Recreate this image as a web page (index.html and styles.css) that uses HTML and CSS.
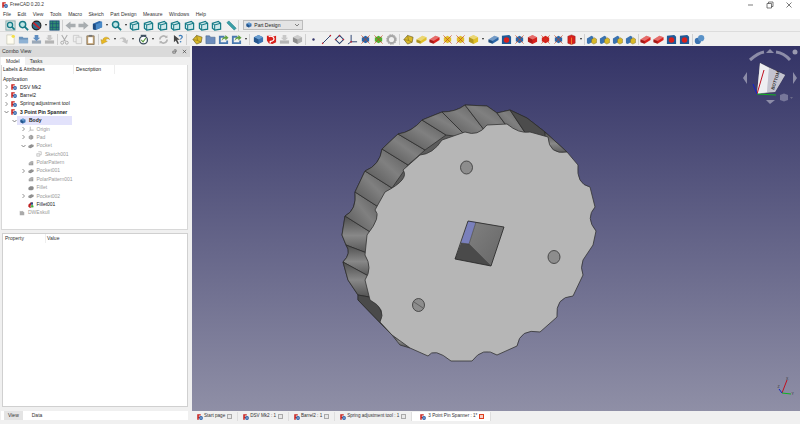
FILE: index.html
```html
<!DOCTYPE html>
<html lang="en">
<head>
    <meta charset="UTF-8">
    <title>FreeCAD 0.20.2</title>
    <link rel="stylesheet" href="styles.css">
</head>
<body>
    <!-- shared icons -->
    <svg class="defs" width="0" height="0">
        <symbol id="fc" viewBox="0 0 12 12"><path d="M.5 .5h7v2.500H3.500v2.500h3V8h-3v3.500H.5z" fill="#c8201c"/><circle cx="8" cy="8" r="3.800" fill="#2a5fa8"/><circle cx="8" cy="8" r="1.400" fill="#cfe0f0"/></symbol>
        <symbol id="mag" viewBox="0 0 12 12"><circle cx="5" cy="5" r="3.400" fill="#bfe6e6" stroke="#157a86" stroke-width="1.600"/><path d="M7.500 7.500l3.500 3.500" stroke="#157a86" stroke-width="2"/></symbol>
        <symbol id="fit" viewBox="0 0 12 12"><rect x="1" y="1" width="10" height="10" fill="#d8e4e4" stroke="#8aa"/><circle cx="5.500" cy="5.500" r="2.800" fill="#bfe6e6" stroke="#157a86" stroke-width="1.400"/><path d="M7.500 7.500l3 3" stroke="#157a86" stroke-width="1.800"/></symbol>
        <symbol id="stop" viewBox="0 0 12 12"><circle cx="6" cy="6" r="4.800" fill="#2f6a8a" stroke="#222" stroke-width="1.200"/><path d="M2.500 2.800l7 6.400" stroke="#d0202a" stroke-width="1.800"/></symbol>
        <symbol id="grid" viewBox="0 0 12 12"><rect x="1" y="1" width="10" height="10" fill="#2f8f6f" stroke="#1d4f7a"/><path d="M4 1v10M8 1v10M1 4h10M1 8h10" stroke="#1d4f7a" stroke-width=".8"/></symbol>
        <symbol id="arr-l" viewBox="0 0 12 12"><path d="M.5 6L6 1.500V4h5.500v4H6v2.500z" fill="#a8adb0"/></symbol>
        <symbol id="arr-r" viewBox="0 0 12 12"><path d="M11.500 6L6 1.500V4H.5v4H6v2.500z" fill="#a8adb0"/></symbol>
        <symbol id="book" viewBox="0 0 12 12"><path d="M1 4l7-3 3 1v6l-7 3-3-1z" fill="#2a66a8"/><path d="M4 5l7-3v6l-7 3z" fill="#4a8ac8"/><path d="M1 4l3 1v6l-3-1z" fill="#1d4a80"/></symbol>
        <symbol id="wire" viewBox="0 0 12 12"><path d="M1.500 3.500L8 1.500l2.500 2v6.500L4 11 1.500 9z" fill="#cfe8ea" stroke="#157a86" stroke-width="1.300"/><path d="M1.500 3.500L4 5.500l6.500-2M4 5.500V11" fill="none" stroke="#157a86" stroke-width="1.100"/></symbol>
        <symbol id="ruler" viewBox="0 0 12 12"><path d="M1 3l2-2 8 8-2 2z" fill="#3aa0a8" stroke="#157a86" stroke-width=".7"/></symbol>
        <symbol id="new" viewBox="0 0 12 12"><path d="M2 1h6l2 2v8H2z" fill="#fffdf0" stroke="#c8c8b8" stroke-width=".8"/><circle cx="9" cy="2.500" r="1.800" fill="#f4e04a"/></symbol>
        <symbol id="open" viewBox="0 0 12 12"><path d="M1 3h4l1 1h5v6H1z" fill="#6c94bc"/><path d="M1 6h10v4H1z" fill="#8fb2d4"/></symbol>
        <symbol id="save" viewBox="0 0 12 12"><path d="M1 7h10v3.500H1z" fill="#9aa8b8"/><path d="M4 1h4v3h2L6 7.500 2 4h2z" fill="#5d8cc0"/></symbol>
        <symbol id="print" viewBox="0 0 12 12"><path d="M1 7h10v3.500H1z" fill="#b4b4b4"/><path d="M4 1h4v3h2L6 7.500 2 4h2z" fill="#c8c8c8"/></symbol>
        <symbol id="cut" viewBox="0 0 12 12"><path d="M3 1l4 7M9 1L5 8" stroke="#aaa" stroke-width="1.100"/><circle cx="3.500" cy="9.500" r="1.600" fill="none" stroke="#aaa"/><circle cx="8.500" cy="9.500" r="1.600" fill="none" stroke="#aaa"/></symbol>
        <symbol id="copy" viewBox="0 0 12 12"><path d="M1.500 1.500h6v7h-6z" fill="#eee" stroke="#ccc"/><path d="M4.500 3.500h6v7h-6z" fill="#eee" stroke="#ccc"/></symbol>
        <symbol id="paste" viewBox="0 0 12 12"><path d="M2 2h8v9.500H2z" fill="#c9a878" stroke="#7a6a50" stroke-width=".8"/><path d="M3.500 3.500h5v6.500h-5z" fill="#fff"/><path d="M4 1h4v2H4z" fill="#777"/></symbol>
        <symbol id="undo" viewBox="0 0 12 12"><path d="M3 7c0-4 6-5 7.500-1-2-1.500-4-1-4.500 1l2 1L2 11 1 6z" fill="#e8b820" stroke="#a88010" stroke-width=".4"/></symbol>
        <symbol id="redo" viewBox="0 0 12 12"><path d="M9 7C9 3 3 2 1.500 6c2-1.500 4-1 4.500 1L4 8l6 3 1-5z" fill="#c4c4c4"/></symbol>
        <symbol id="clock" viewBox="0 0 12 12"><circle cx="6" cy="6.500" r="4.300" fill="#fff" stroke="#3c4e5e" stroke-width="1.400"/><path d="M3 1.500h6" stroke="#3c4e5e" stroke-width="1.300"/><path d="M3.500 6.500l2 2 3-4" fill="none" stroke="#5a9a40" stroke-width="1.200"/></symbol>
        <symbol id="refresh" viewBox="0 0 12 12"><path d="M2 6a4 4 0 0 1 7-2.500M10 6a4 4 0 0 1-7 2.500" fill="none" stroke="#b4b4b4" stroke-width="1.800"/><path d="M7.500 4.500l3-.5-.5-3zM4.500 7.500l-3 .5.500 3z" fill="#b4b4b4"/></symbol>
        <symbol id="what" viewBox="0 0 12 12"><path d="M1 1l0 8 2-2 2 4 1.500-.7-2-4h3z" fill="#444"/><path d="M6.500 2.500c1-1.500 4-1 3.500 1-.3 1-1.700 1.200-1.700 2.500" fill="none" stroke="#3a7ab8" stroke-width="1.300"/><circle cx="8.300" cy="8.500" r=".9" fill="#3a7ab8"/></symbol>
        <symbol id="gem" viewBox="0 0 12 12"><path d="M1 6l4-4.500 6 2-1 5.500-5 2z" fill="#d8b828" stroke="#6a5a20" stroke-width=".7"/><path d="M5 1.500L6 7l4 2M1 6l5 1" fill="none" stroke="#6a5a20" stroke-width=".5"/></symbol>
        <symbol id="folder" viewBox="0 0 12 12"><path d="M1 2h4l1 1.500h5V10.500H1z" fill="#6c8cbc" stroke="#46648c" stroke-width=".6"/></symbol>
        <symbol id="exp" viewBox="0 0 12 12"><path d="M1 2h6v2H3v5h6V7h2v4H1z" fill="#4a7ab0"/><path d="M4 8c0-3 2-5 4-5V1l3.500 3L8 7V5C6 5 5 6 4 8z" fill="#60a040"/></symbol>
        <symbol id="body" viewBox="0 0 12 12"><path d="M6 1l5 2.500v5L6 11 1 8.500v-5z" fill="#3a72b0"/><path d="M1 3.500L6 6l5-2.500L6 1z" fill="#6a9ed0"/><path d="M6 6v5L1 8.500v-5z" fill="#25558c"/></symbol>
        <symbol id="cube" viewBox="0 0 12 12"><path d="M1 3.500L6 1l5 2.500v5L6 11 1 8.500z" fill="currentColor"/><path d="M1 3.500L6 1l5 2.500L6 6z" fill="#fff" opacity=".35"/><path d="M6 6v5L1 8.500v-5z" fill="#000" opacity=".2"/></symbol>
        <symbol id="slab" viewBox="0 0 12 12"><path d="M.5 6L7 2l4.500 1.500v3L5 10.500.5 9z" fill="currentColor"/><path d="M.5 6L7 2l4.500 1.500L5 7.500z" fill="#fff" opacity=".35"/><path d="M5 7.500v3L.5 9V6z" fill="#000" opacity=".25"/></symbol>
        <symbol id="redbox" viewBox="0 0 12 12"><path d="M2 2.500L6 1l4 1.500V10l-4 1.500L2 10z" fill="#d8201c" stroke="#8a1c1c" stroke-width=".5"/><path d="M6 4v7.500" stroke="#ffcc40" stroke-width=".6"/></symbol>
        <symbol id="bluered" viewBox="0 0 12 12"><path d="M1 2l8-1 2 2v8H1z" fill="#1f5a98"/><circle cx="6" cy="6.500" r="3" fill="#d8201c"/></symbol>
        <symbol id="xform" viewBox="0 0 12 12"><path d="M2 4l4-2 4 2v4l-4 2-4-2z" fill="currentColor"/><path d="M1.500 1.500l9 9M10.500 1.500l-9 9" stroke="#c8401c" stroke-width=".7"/></symbol>
        <symbol id="mix" viewBox="0 0 12 12"><path d="M1 5l5-3 2 1v5l-5 3-2-1z" fill="#3a72b0"/><path d="M6 6l3-2 2.500 1.500v4L8.500 11 6 9.500z" fill="#d8b828" stroke="#6a5a20" stroke-width=".4"/></symbol>
        <symbol id="spheres" viewBox="0 0 12 12"><circle cx="4.200" cy="7.500" r="3.400" fill="#3a72b0"/><circle cx="7.800" cy="4.500" r="3.400" fill="#5a92c8"/></symbol>
        <symbol id="ptdot" viewBox="0 0 12 12"><circle cx="6" cy="6" r="1.300" fill="#34346a"/></symbol>
        <symbol id="line" viewBox="0 0 12 12"><path d="M1.500 10.500L10.500 1.500" stroke="#223a6a" stroke-width="1"/><circle cx="1.800" cy="10.200" r=".9" fill="#c02030"/><circle cx="10.200" cy="1.800" r=".9" fill="#c02030"/></symbol>
        <symbol id="plane" viewBox="0 0 12 12"><path d="M6 1.500L10.500 6 6 10.500 1.500 6z" fill="none" stroke="#223a6a" stroke-width="1.100"/><circle cx="6" cy="1.800" r=".9" fill="#c02030"/><circle cx="1.800" cy="6" r=".9" fill="#c02030"/><circle cx="10.200" cy="6" r=".9" fill="#c02030"/></symbol>
        <symbol id="axes" viewBox="0 0 12 12"><path d="M4.500 1v7.500H11M4.500 8.500L1 11" fill="none" stroke="#223a6a" stroke-width="1"/><circle cx="4.500" cy="8.500" r="1" fill="#c02030"/></symbol>
        <symbol id="gearg" viewBox="0 0 12 12"><circle cx="6" cy="6" r="4" fill="none" stroke="#a8a8a8" stroke-width="2.400"/><circle cx="6" cy="6" r="5.400" fill="none" stroke="#a8a8a8" stroke-width="1" stroke-dasharray="1.500 1.300"/></symbol>
        <symbol id="skb" viewBox="0 0 12 12"><path d="M1 2h5l1 1 4-1v7l-4 2-4-1-2-3z" fill="#d8201c"/><path d="M3 3c4-2 7 2 5 4s-5 0-3 3" fill="none" stroke="#fff" stroke-width="1.200"/></symbol>
        <symbol id="chev-r" viewBox="0 0 6 6"><path d="M2 1l2 2-2 2" fill="none" stroke="#666" stroke-width=".7"/></symbol>
        <symbol id="chev-d" viewBox="0 0 6 6"><path d="M1 2l2 2 2-2" fill="none" stroke="#555" stroke-width=".7"/></symbol>
        <symbol id="t-origin" viewBox="0 0 8 8"><path d="M3 1v4.500H7.500M3 5.500L1 7.500" fill="none" stroke="#999" stroke-width=".9"/></symbol>
        <symbol id="t-pad" viewBox="0 0 8 8"><path d="M1 3l3-2 3 1.500v3.500L4 7.500 1 6z" fill="#999"/><path d="M1 4h6M3 2v5" stroke="#ddd" stroke-width=".4"/></symbol>
        <symbol id="t-pocket" viewBox="0 0 8 8"><path d="M.5 4l4-2.500 3 1v2l-4 2.500-3-1z" fill="#8a8a8a"/><path d="M.5 4l3 1 4-2.500" fill="none" stroke="#bbb" stroke-width=".4"/></symbol>
        <symbol id="t-sketch" viewBox="0 0 8 8"><path d="M3 1h4v4H5" fill="none" stroke="#aaa" stroke-width=".8"/><path d="M1 3.500h4V7H1z" fill="#eee" stroke="#aaa" stroke-width=".7"/></symbol>
        <symbol id="t-polar" viewBox="0 0 8 8"><path d="M1 7V4l3-2.500h3V7z" fill="#999"/><path d="M1 5l6-2M3 2.500V7M5 2v5" stroke="#ddd" stroke-width=".4"/></symbol>
        <symbol id="t-fillet" viewBox="0 0 8 8"><path d="M.5 3.500l2.500-2h3l1.500 1v3l-2 1.500H2l-1.500-1z" fill="#8a8a8a"/></symbol>
        <symbol id="t-active" viewBox="0 0 8 8"><path d="M.5 3.500L3.500.5h3V4L4 7.500H2L.5 6z" fill="#c02020"/><path d="M3.500.5h3V4H4z" fill="#1f4f90"/><circle cx="5.500" cy="5.500" r="2" fill="#40b040" stroke="#fff" stroke-width=".5"/></symbol>
        <symbol id="t-grp" viewBox="0 0 8 8"><path d="M1 7V1l1.500 1V1L4 2V1l3 2v4z" fill="#aaa"/></symbol>
    </svg>

    <div class="titlebar">
        <svg class="app-icon"><use href="#fc"/></svg>
        <span class="app-title">FreeCAD 0.20.2</span>
        <div class="win-btns">
            <svg class="win-btn" viewBox="0 0 8 8"><path d="M1 4h5" stroke="#444" stroke-width=".7"/></svg>
            <svg class="win-btn" viewBox="0 0 8 8"><path d="M1 2.500h4.500V7H1zM2.500 2.500V1H7v4.500H5.500" fill="none" stroke="#444" stroke-width=".7"/></svg>
            <svg class="win-btn" viewBox="0 0 8 8"><path d="M1.500 1.500l5 5M6.500 1.500l-5 5" stroke="#444" stroke-width=".7"/></svg>
        </div>
    </div>

    <div class="menubar">
        <span>File</span><span>Edit</span><span>View</span><span>Tools</span><span>Macro</span><span>Sketch</span><span>Part Design</span><span>Measure</span><span>Windows</span><span>Help</span>
    </div>

    <div class="toolbar tb-top">
        <svg class="ic"><use href="#fit"/></svg>
        <svg class="ic"><use href="#mag"/></svg>
        <svg class="ic"><use href="#stop"/></svg>
        <i class="dd"></i>
        <svg class="ic"><use href="#grid"/></svg>
        <b class="sep"></b>
        <svg class="ic g1"><use href="#arr-l"/></svg>
        <svg class="ic"><use href="#arr-r"/></svg>
        <svg class="ic g1"><use href="#book"/></svg>
        <i class="dd"></i>
        <svg class="ic g1"><use href="#mag"/></svg>
        <i class="dd"></i>
        <svg class="ic w14"><use href="#wire"/></svg>
        <svg class="ic w14"><use href="#wire"/></svg>
        <svg class="ic w14"><use href="#wire"/></svg>
        <svg class="ic w14"><use href="#wire"/></svg>
        <svg class="ic w14"><use href="#wire"/></svg>
        <svg class="ic w14"><use href="#wire"/></svg>
        <svg class="ic w14"><use href="#wire"/></svg>
        <svg class="ic g1"><use href="#ruler"/></svg>
        <b class="sep"></b>
        <div class="wb-select">
            <svg class="wb-icon"><use href="#body"/></svg>
            <span>Part Design</span>
            <svg class="wb-arrow"><use href="#chev-d"/></svg>
        </div>
    </div>

    <div class="toolbar tb-bottom">
        <svg class="ic"><use href="#new"/></svg>
        <svg class="ic"><use href="#open"/></svg>
        <svg class="ic"><use href="#save"/></svg>
        <svg class="ic"><use href="#print"/></svg>
        <b class="sep"></b>
        <svg class="ic"><use href="#cut"/></svg>
        <svg class="ic"><use href="#copy"/></svg>
        <svg class="ic"><use href="#paste"/></svg>
        <b class="sep"></b>
        <svg class="ic"><use href="#undo"/></svg>
        <i class="dd"></i>
        <svg class="ic"><use href="#redo"/></svg>
        <i class="dd"></i>
        <svg class="ic g2"><use href="#clock"/></svg>
        <i class="dd"></i>
        <svg class="ic g2"><use href="#refresh"/></svg>
        <svg class="ic g2"><use href="#what"/></svg>
        <b class="sep"></b>
        <svg class="ic g4"><use href="#gem"/></svg>
        <svg class="ic"><use href="#folder"/></svg>
        <svg class="ic"><use href="#exp"/></svg>
        <svg class="ic"><use href="#exp"/></svg>
        <i class="dd"></i>
        <b class="sep"></b>
        <svg class="ic g2"><use href="#body"/></svg>
        <svg class="ic"><use href="#skb"/></svg>
        <svg class="ic"><use href="#print"/></svg>
        <svg class="ic c-grey"><use href="#cube"/></svg>
        <b class="sep"></b>
        <svg class="ic g1"><use href="#ptdot"/></svg>
        <svg class="ic"><use href="#line"/></svg>
        <svg class="ic"><use href="#plane"/></svg>
        <svg class="ic"><use href="#axes"/></svg>
        <svg class="ic c-blue"><use href="#xform"/></svg>
        <svg class="ic c-green"><use href="#xform"/></svg>
        <svg class="ic"><use href="#gearg"/></svg>
        <b class="sep"></b>
        <svg class="ic g2"><use href="#gem"/></svg>
        <svg class="ic c-yellow"><use href="#slab"/></svg>
        <svg class="ic c-red"><use href="#slab"/></svg>
        <svg class="ic c-yellow"><use href="#xform"/></svg>
        <svg class="ic c-yellow"><use href="#xform"/></svg>
        <svg class="ic c-yellow"><use href="#cube"/></svg>
        <i class="dd"></i>
        <svg class="ic g2 c-blue"><use href="#slab"/></svg>
        <svg class="ic"><use href="#bluered"/></svg>
        <svg class="ic c-blue"><use href="#xform"/></svg>
        <svg class="ic c-red"><use href="#cube"/></svg>
        <svg class="ic c-red"><use href="#xform"/></svg>
        <svg class="ic c-blue"><use href="#xform"/></svg>
        <svg class="ic"><use href="#redbox"/></svg>
        <i class="dd"></i>
        <b class="sep"></b>
        <svg class="ic"><use href="#mix"/></svg>
        <svg class="ic"><use href="#mix"/></svg>
        <svg class="ic"><use href="#mix"/></svg>
        <svg class="ic"><use href="#mix"/></svg>
        <b class="sep"></b>
        <svg class="ic c-red"><use href="#slab"/></svg>
        <svg class="ic c-red"><use href="#slab"/></svg>
        <svg class="ic"><use href="#bluered"/></svg>
        <svg class="ic"><use href="#bluered"/></svg>
        <b class="sep"></b>
        <svg class="ic"><use href="#spheres"/></svg>
    </div>

    <div class="main">
        <div class="side">
            <div class="dock-title">
                <span>Combo View</span>
                <div class="dock-btns">
                    <svg viewBox="0 0 6 6"><path d="M1 2.500h3V5H1zM2.500 1H5v2.500" fill="none" stroke="#444" stroke-width=".7"/></svg>
                    <svg viewBox="0 0 6 6"><path d="M1 1l4 4M5 1L1 5" stroke="#444" stroke-width=".8"/></svg>
                </div>
            </div>
            <div class="tabs">
                <span class="tab on">Model</span>
                <span class="tab">Tasks</span>
            </div>
            <div class="tree-box">
                <div class="tree-head">
                    <span class="col-label">Labels &amp; Attributes</span>
                    <span class="col-desc">Description</span>
                </div>
                <div class="group-name">Application</div>
                <div class="row lv0"><svg class="tw"><use href="#chev-r"/></svg><svg class="ti"><use href="#fc"/></svg><span>DSV Mk2</span></div>
                <div class="row lv0"><svg class="tw"><use href="#chev-r"/></svg><svg class="ti"><use href="#fc"/></svg><span>Barrel2</span></div>
                <div class="row lv0"><svg class="tw"><use href="#chev-r"/></svg><svg class="ti"><use href="#fc"/></svg><span>Spring adjustment tool</span></div>
                <div class="row lv0 bold"><svg class="tw"><use href="#chev-d"/></svg><svg class="ti"><use href="#fc"/></svg><span>3 Point Pin Spanner</span></div>
                <div class="row lv1 bold"><svg class="tw"><use href="#chev-d"/></svg><div class="sel"><svg class="ti"><use href="#body"/></svg><span>Body</span></div></div>
                <div class="row lv2 dim"><svg class="tw"><use href="#chev-r"/></svg><svg class="ti"><use href="#t-origin"/></svg><span>Origin</span></div>
                <div class="row lv2 dim"><svg class="tw"><use href="#chev-r"/></svg><svg class="ti"><use href="#t-pad"/></svg><span>Pad</span></div>
                <div class="row lv2 dim"><svg class="tw"><use href="#chev-d"/></svg><svg class="ti"><use href="#t-pocket"/></svg><span>Pocket</span></div>
                <div class="row lv3 dim"><i class="tw"></i><svg class="ti"><use href="#t-sketch"/></svg><span>Sketch001</span></div>
                <div class="row lv2 dim"><i class="tw"></i><svg class="ti"><use href="#t-polar"/></svg><span>PolarPattern</span></div>
                <div class="row lv2 dim"><svg class="tw"><use href="#chev-r"/></svg><svg class="ti"><use href="#t-pocket"/></svg><span>Pocket001</span></div>
                <div class="row lv2 dim"><i class="tw"></i><svg class="ti"><use href="#t-polar"/></svg><span>PolarPattern001</span></div>
                <div class="row lv2 dim"><i class="tw"></i><svg class="ti"><use href="#t-fillet"/></svg><span>Fillet</span></div>
                <div class="row lv2 dim"><svg class="tw"><use href="#chev-r"/></svg><svg class="ti"><use href="#t-pocket"/></svg><span>Pocket002</span></div>
                <div class="row lv2"><i class="tw"></i><svg class="ti"><use href="#t-active"/></svg><span>Fillet001</span></div>
                <div class="row lv1 dim"><i class="tw"></i><svg class="ti"><use href="#t-grp"/></svg><span>DWEskull</span></div>
            </div>
            <div class="prop-box">
                <div class="prop-head">
                    <span class="col-prop">Property</span>
                    <span>Value</span>
                </div>
            </div>
            <div class="side-tabs">
                <span class="stab">View</span>
                <span class="stab on">Data</span>
            </div>
        </div>

        <div class="right">
            <div class="view3d">
                <svg class="scene" viewBox="192 46 608 365" width="608" height="365">
                    <defs>
                        <linearGradient id="wall" x1="0" y1="1" x2="1" y2="0">
                            <stop offset="0" stop-color="#505050"/>
                            <stop offset=".55" stop-color="#808080"/>
                            <stop offset="1" stop-color="#585858"/>
                        </linearGradient>
                        <linearGradient id="wall2" x1="0" y1="0" x2="0" y2="1">
                            <stop offset="0" stop-color="#4e4e4e"/>
                            <stop offset=".5" stop-color="#888"/>
                            <stop offset="1" stop-color="#505050"/>
                        </linearGradient>
                        <linearGradient id="bore" x1="0" y1="0" x2="1" y2="1">
                            <stop offset="0" stop-color="#808080"/>
                            <stop offset="1" stop-color="#666"/>
                        </linearGradient>
                    </defs>

                    <!-- side wall, one piece per tooth -->
                    <path class="wall-base" d="M345 216L342 235L346 245Q352 253 343 262L348 280L358 295L358 300L392 335L402 336L410 348L470 240L567 152L545 132L527 118L510 110L497 113L487 106L465 105Q456 112 442 112L422 120Q412 132 398 134L382 149Q380 165 365 171L355 192Q357 210 345 216Z"/>
                    <g class="walls">
                        <path fill="url(#wall2)" d="M345 216L342 235L346 245L372 255L375 235Z"/>
                        <path fill="url(#wall2)" d="M346 245Q352 253 343 262L372 278L372 255Z"/>
                        <path fill="url(#wall2)" d="M343 262L348 280L358 295L375 298L372 278Z"/>
                        <path fill="#4a4a4a" d="M358 295L358 300L392 335L385 320L375 298Z"/>
                        <path fill="url(#wall)" d="M345 216Q357 210 355 192L380 208L375 235Z"/>
                        <path fill="url(#wall)" d="M355 192L365 171L392 188L380 208Z"/>
                        <path fill="url(#wall)" d="M365 171Q380 165 382 149L408 165L392 188Z"/>
                        <path fill="url(#wall)" d="M382 149L398 134L425 150L408 165Z"/>
                        <path fill="url(#wall)" d="M398 134Q412 132 422 120L446 135L425 150Z"/>
                        <path fill="url(#wall)" d="M422 120L442 112L468 138L446 135Z"/>
                        <path fill="url(#wall)" d="M442 112Q456 112 465 105L488 135L468 138Z"/>
                        <path fill="url(#wall)" d="M465 105L487 106L497 113L517 140L488 135Z"/>
                        <path fill="url(#wall)" d="M497 113L510 110L530 140L517 140Z"/>
                        <path fill="#4c4c4c" d="M510 110L527 118L545 132L548 145L530 140Z"/>
                        <path fill="url(#wall2)" d="M545 132L567 152L550 155L545 145Z"/>
                        <path fill="url(#wall2)" d="M392 335L402 336Q409 340 410 348L400 345Z"/>
                    </g>

                    <!-- front face -->
                    <path class="face" d="M367 235Q382 216 375 210L385 192Q410 179 403 170L420 155Q433 154 442 140L465 132Q478 137 487 125L507 124Q519 134 530 132L548 137Q549 155 567 152L578 165Q576 184 590 187L595 207Q585 218 596 231L593 245L583 260Q580 268 583 275L573 296Q555 297 557 317L540 332Q520 328 517 346L497 355Q483 346 472 361L451 361Q434 347 428 356L410 348L392 335L380 322Q387 309 370 300L365 280Q373 268 365 255Z"/>

                    <!-- square bore -->
                    <path fill="#7a80bc" d="M468 221L476 222L469 244L461 243Z"/>
                    <path fill="url(#bore)" d="M476 222L504 227L491 266L469 244Z"/>
                    <path fill="#4a4a4a" d="M461 243L469 244L491 266L455 259Z"/>
                    <path class="edge" d="M468 221L504 227L491 266L455 259Z"/>
                    <path class="edge thin" d="M476 222L469 244L491 266M461 243L469 244"/>

                    <!-- pin holes -->
                    <ellipse class="hole" cx="466.500" cy="167.500" rx="6" ry="6.500"/>
                    <ellipse class="hole" cx="554" cy="257" rx="6" ry="6.500"/>
                    <ellipse class="hole" cx="418.500" cy="305" rx="6" ry="6.500"/>
                    <path class="edge thin" d="M414 302L423 308"/>

                    <!-- navigation cube -->
                    <g class="navcube">
                        <path class="nav-arc" d="M750 60Q758 53 764 52M776 52Q784 53 790 60"/>
                        <path class="nav-arr" d="M770 49L774 53H766ZM747 72L743 78L747 84ZM793 72L797 78L793 84ZM766 100H775L770 104Z"/>
                        <path fill="#d8d8e0" stroke="#444" stroke-width=".4" d="M760 63L785 75L775 92L757 94Z"/>
                        <path fill="#eeeef2" d="M760 63L769 68L767 92L757 94Z"/>
                        <path fill="#c4c4d0" d="M769 68L785 75L775 92L767 92Z"/>
                        <text class="nav-label" transform="translate(774,90) rotate(-72)">BOTTOM</text>
                        <path d="M757 94L764 70" class="ax-red"/>
                        <path d="M757 94L776 95" class="ax-green"/>
                        <path d="M757 94L753 84" class="ax-blue"/>
                        <path fill="#77779a" d="M780 95l4-1.500 4 1.500v5l-4 1.500-4-1.500z"/>
                        <circle cx="795" cy="52" r="2.500" fill="#9a9ab0"/>
                        <path d="M790 97h3l-1.500 2z" fill="#6a6a88"/>
                    </g>

                    <!-- corner axes -->
                    <g class="axis-cross">
                        <path d="M782 393L787 380" class="ax-red"/>
                        <path d="M782 393L791 394" class="ax-green"/>
                        <path d="M782 393L779 389" class="ax-blue"/>
                        <text class="ax-label" x="786" y="380">X</text>
                        <text class="ax-label" x="791.500" y="395">Y</text>
                        <text class="ax-label" x="777.500" y="388">Z</text>
                    </g>
                </svg>
            </div>
            <div class="doc-tabs">
                <div class="doc-tab"><svg class="ti"><use href="#fc"/></svg><span>Start page</span><i class="x"></i></div>
                <div class="doc-tab"><svg class="ti"><use href="#fc"/></svg><span>DSV Mk2 : 1</span><i class="x"></i></div>
                <div class="doc-tab"><svg class="ti"><use href="#fc"/></svg><span>Barrel2 : 1</span><i class="x"></i></div>
                <div class="doc-tab"><svg class="ti"><use href="#fc"/></svg><span>Spring adjustment tool : 1</span><i class="x"></i></div>
                <div class="doc-tab on"><svg class="ti"><use href="#fc"/></svg><span>3 Point Pin Spanner : 1*</span><i class="x red"></i></div>
            </div>
        </div>
    </div>
</body>
</html>
```

FILE: styles.css
```css
* {
    box-sizing: border-box;
}
html, body {
    margin: 0;
    height: 424px;
    overflow: hidden;
}
body {
    font-family: "Liberation Sans", Arial, sans-serif;
    font-size: 5px;
    line-height: 1;
    color: #222;
    background: #f0f0f0;
    width: 800px;
}
.defs {
    display: block;
    height: 0;
}
svg {
    display: block;
}

/* window chrome */
.titlebar {
    height: 10px;
    background: #fff;
    display: flex;
    align-items: center;
    padding-left: 2px;
}
.app-icon {
    width: 6px;
    height: 6px;
}
.app-title {
    margin-left: 2px;
    font-size: 4.700px;
    color: #333;
}
.win-btns {
    margin-left: auto;
    display: flex;
    gap: 11px;
    padding-right: 7px;
}
.win-btn {
    width: 8px;
    height: 8px;
}
.menubar {
    height: 9px;
    background: #fff;
    display: flex;
    align-items: center;
    gap: 6.500px;
    padding-left: 3px;
    color: #333;
}

/* toolbars */
.toolbar {
    display: flex;
    align-items: center;
    padding-left: 4px;
    background: #f0f0f0;
}
.tb-top {
    height: 13px;
    border-bottom: 1px solid #dcdcdc;
}
.tb-bottom {
    height: 14px;
}
.ic {
    width: 11px;
    height: 11px;
    margin: 0 1px;
    flex: none;
}
.ic.w14 {
    margin: 0 1.350px;
}
.ic.g1 {
    margin-left: 2px;
}
.ic.g2 {
    margin-left: 3px;
}
.ic.g4 {
    margin-left: 5px;
}
.dd {
    flex: none;
    width: 5px;
    height: 3px;
}
.dd::after {
    content: "";
    display: block;
    width: 0;
    margin: 0 auto;
    border: 1.500px solid transparent;
    border-top: 2px solid #222;
    border-bottom: 0;
}
.sep {
    flex: none;
    width: 1px;
    height: 11px;
    margin: 0 .5px;
    background: #d0d0d0;
}
.c-red { color: #d8201c; }
.c-blue { color: #2a66a8; }
.c-green { color: #50b030; }
.c-yellow { color: #e0c028; }
.c-grey { color: #b0b0b0; }

.wb-select {
    width: 60px;
    height: 10px;
    margin-left: 3.500px;
    display: flex;
    align-items: center;
    gap: 2px;
    padding: 0 2px;
    background: #e4e4e4;
    border: 1px solid #bcbcbc;
}
.wb-icon {
    width: 6px;
    height: 6px;
}
.wb-arrow {
    width: 6px;
    height: 6px;
    margin-left: auto;
}

.main {
    height: 378px;
    display: flex;
}

/* combo view */
.side {
    width: 192px;
    flex: none;
    display: flex;
    flex-direction: column;
    padding-right: 4px;
}
.side > * {
    flex: none;
}
.dock-title {
    height: 11px;
    display: flex;
    align-items: center;
    justify-content: space-between;
    background: #dadada;
    margin-right: -2px;
    padding: 0 3px 0 2px;
    font-size: 5.200px;
    color: #333;
}
.dock-btns {
    display: flex;
    gap: 5px;
}
.dock-btns svg {
    width: 5px;
    height: 5px;
}
.tabs {
    height: 8px;
    display: flex;
    padding-left: 1px;
}
.tab {
    height: 8px;
    line-height: 8px;
    padding: 0 5px;
    color: #333;
}
.tab.on {
    background: #fff;
}
.tree-box {
    height: 165px;
    margin-left: 1px;
    background: #fff;
    border: 1px solid #d8d8d8;
    border-top: 0;
}
.tree-head {
    height: 9px;
    display: flex;
    align-items: center;
    padding-left: 1px;
}
.col-label {
    width: 71px;
    height: 9px;
    line-height: 9px;
    border-right: 1px solid #eee;
}
.col-desc {
    width: 41px;
    height: 9px;
    line-height: 9px;
    padding-left: 2px;
    border-right: 1px solid #eee;
}
.group-name {
    height: 8.400px;
    line-height: 9px;
    margin-top: .5px;
    padding-left: 1px;
}
.row {
    height: 8.400px;
    display: flex;
    align-items: center;
    white-space: nowrap;
}
.lv0 { padding-left: 0; }
.lv1 { padding-left: 8px; }
.lv2 { padding-left: 16.500px; }
.lv3 { padding-left: 25px; }
.tw {
    width: 9px;
    height: 6px;
    flex: none;
}
.ti {
    width: 6px;
    height: 6px;
    flex: none;
    margin-right: 3px;
}
.bold {
    font-weight: bold;
}
.dim {
    color: #999;
}
.sel {
    display: flex;
    align-items: center;
    width: 55px;
    height: 8.400px;
    background: #e2e2fb;
    margin-left: -2px;
    padding-left: 3px;
}
.prop-box {
    height: 174px;
    margin: 3px 0 0 2px;
    background: #fff;
    border: 1px solid #d0d0d0;
}
.prop-head {
    height: 9px;
    display: flex;
    align-items: center;
    padding-left: 2px;
    color: #333;
}
.col-prop {
    width: 41px;
    height: 9px;
    line-height: 9px;
    border-right: 1px solid #eee;
    margin-right: 1px;
}
.side-tabs {
    height: 9px;
    margin: 4px 0 0 1px;
    display: flex;
    background: #fff;
}
.stab {
    height: 9px;
    line-height: 9px;
    padding: 0 4px;
    color: #333;
    background: #e4e4e4;
    margin-left: 3px;
}
.stab.on {
    background: #fff;
    padding: 0 6px;
}

/* 3d view */
.right {
    flex: 1;
    min-width: 0;
}
.view3d {
    height: 365px;
    background: linear-gradient(#333366, #8f8fa6);
}
.face {
    fill: #b6b6b6;
    stroke: #333;
    stroke-width: .8;
    stroke-linejoin: round;
}
.wall-base {
    fill: #5c5c5c;
    stroke: #2a2a2a;
    stroke-width: .7;
    stroke-linejoin: round;
}
.walls path {
    stroke: #2a2a2a;
    stroke-width: .7;
    stroke-linejoin: round;
}
.edge {
    fill: none;
    stroke: #222;
    stroke-width: .8;
}
.edge.thin {
    stroke: #333;
    stroke-width: .5;
}
.hole {
    fill: #8d8d8d;
    stroke: #333;
    stroke-width: .8;
}
.nav-arc {
    fill: none;
    stroke: #8d8da8;
    stroke-width: 3;
}
.nav-arr {
    fill: #8d8da8;
}
.nav-label {
    font-size: 4.500px;
    font-weight: bold;
    fill: #333;
}
.ax-red, .ax-green, .ax-blue {
    fill: none;
    stroke-width: 1;
}
.ax-red { stroke: #c01020; }
.ax-green { stroke: #10b020; }
.ax-blue { stroke: #1020d0; }
.ax-label {
    font-size: 3.500px;
    fill: #333;
}

/* document tabs */
.doc-tabs {
    height: 9px;
    margin-top: 1px;
    display: flex;
    font-size: 4.600px;
}
.doc-tab {
    display: flex;
    align-items: center;
    padding: 0 5px 0 5px;
    border-right: 1px solid #dedede;
    color: #333;
}
.doc-tab .ti {
    margin-right: 1px;
}
.doc-tab.on {
    background: #fff;
    padding: 0 6px 0 8px;
}
.doc-tab.on .ti {
    margin-right: 2px;
}
.x {
    width: 5px;
    height: 5px;
    margin-left: 2px;
    background: #e8e8e8;
    border: 1px solid #aaa;
}
.x.red {
    background: #f4d0c8;
    border-color: #e04020;
}
```
